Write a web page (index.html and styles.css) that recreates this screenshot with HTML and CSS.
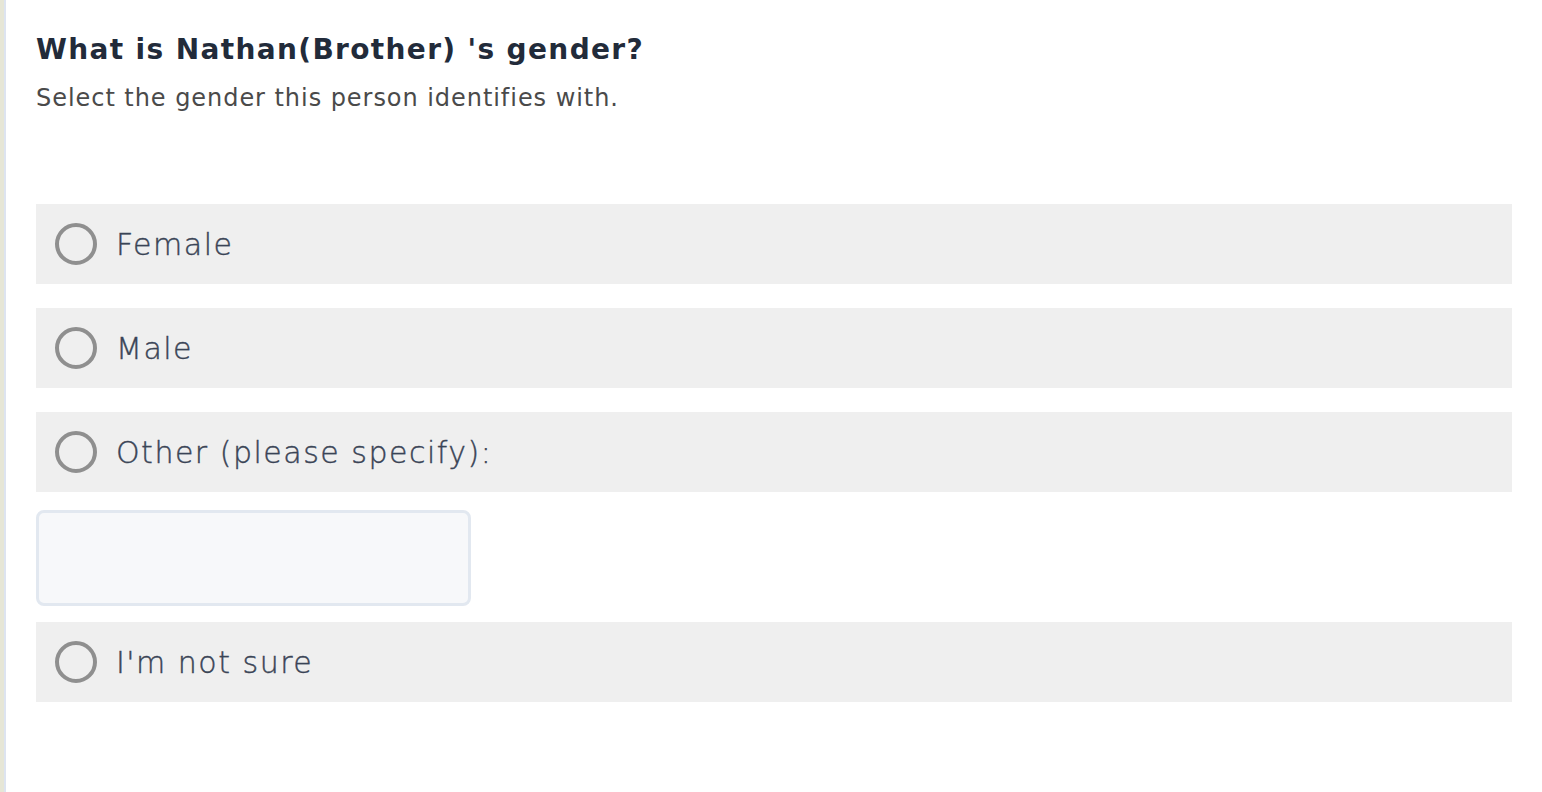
FILE: index.html
```html
<!DOCTYPE html>
<html lang="en">
<head>
<meta charset="utf-8">
<title>Gender question</title>
<link rel="stylesheet" href="styles.css">
</head>
<body>
<div class="page">
  <div class="edge"></div>
  <main class="question">
    <h1 class="title">What is Nathan(Brother) 's gender?</h1>
    <p class="subtitle">Select the gender this person identifies with.</p>
    <div class="options">
      <label class="option"><span class="radio"></span><span class="label">Female</span></label>
      <label class="option"><span class="radio"></span><span class="label">Male</span></label>
      <label class="option"><span class="radio"></span><span class="label">Other (please specify):</span></label>
      <div class="specify"><input class="specify-input" type="text"></div>
      <label class="option"><span class="radio"></span><span class="label">I'm not sure</span></label>
    </div>
  </main>
</div>
</body>
</html>
```
FILE: styles.css
```css
html, body {
  margin: 0;
  padding: 0;
  background: #ffffff;
}
.page {
  display: flex;
  min-height: 792px;
}
.edge {
  width: 4px;
  background: #e6e6d6;
  border-right: 2px solid #dde4f0;
  flex: none;
}
.question {
  flex: 1;
  padding: 30px 30px 0 30px;
  font-family: "DejaVu Sans", "Liberation Sans", sans-serif;
}
.title {
  margin: 0;
  font-size: 28px;
  line-height: 40px;
  font-weight: 700;
  letter-spacing: 1.35px;
  color: #222b3a;
}
.subtitle {
  margin: 13px 0 0 0;
  font-size: 24px;
  line-height: 30px;
  letter-spacing: 0.95px;
  color: #4a4a4a;
  font-weight: 400;
}
.options {
  margin-top: 91px;
  display: flex;
  flex-direction: column;
}
.option {
  display: flex;
  align-items: center;
  height: 80px;
  background: #efefef;
  padding-left: 19px;
  gap: 19px;
  margin-bottom: 24px;
}
.radio {
  width: 34px;
  height: 34px;
  border: 4px solid #8f8f8f;
  border-radius: 50%;
  flex: none;
}
.label {
  font-size: 30px;
  font-weight: 300;
  letter-spacing: 1.5px;
  color: #3a4456;
  -webkit-text-stroke: 0.4px #3a4456;
}
.specify {
  margin-top: -6px;
  margin-bottom: 16px;
}
.specify-input {
  display: block;
  box-sizing: border-box;
  width: 435px;
  height: 96px;
  border: 3px solid #e2e8f0;
  border-radius: 8px;
  background: #f7f8fa;
  margin: 0;
}
```
